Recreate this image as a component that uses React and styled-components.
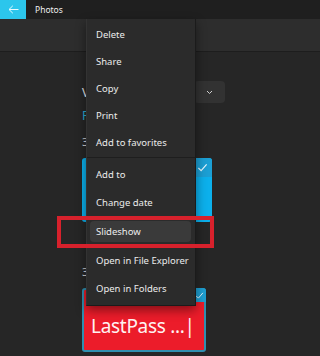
import React from 'react';
import styled, {createGlobalStyle} from 'styled-components';

const GlobalStyle = createGlobalStyle`
  html, body {
    margin: 0;
    padding: 0;
    background: #262626;
  }
  body {
    font-family: 'Noto Sans', 'Open Sans', sans-serif;
  }
`;

const Window = styled.div`
  position: relative;
  width: 320px;
  height: 356px;
  overflow: hidden;
  background: #262626;
  color: #e8e8e8;
`;

const TitleBar = styled.div`
  display: flex;
  align-items: center;
  height: 19px;
  background: #1f1f1f;
`;

const BackButton = styled.div`
  display: flex;
  align-items: center;
  justify-content: center;
  width: 26px;
  height: 19px;
  background: #2cc6ec;
`;

const Title = styled.span`
  margin-left: 9px;
  font-size: 8.5px;
  color: #f0f0f0;
`;

const Toolbar = styled.div`
  height: 32px;
  background: #2d2d2d;
  border-bottom: 1px solid #1d1d1d;
`;

const Content = styled.div`
  display: flex;
  flex-direction: column;
  padding-left: 82px;
  width: 130px;
`;

const FilterRow = styled.div`
  display: flex;
  align-items: center;
  justify-content: space-between;
  margin-top: 29px;
  width: 143px;
  height: 22px;
  font-size: 12px;
`;

const Dropdown = styled.div`
  display: flex;
  align-items: center;
  justify-content: center;
  width: 31px;
  height: 22px;
  border-radius: 4px;
  background: #323232;
`;

const Label = styled.div`
  flex-shrink: 0;
  height: 14px;
  font-size: ${(p) => p.$size || 11}px;
  color: ${(p) => p.$color || '#d8d8d8'};
  line-height: 14px;
  margin-top: ${(p) => p.$top || 0}px;
`;

const BlueTile = styled.div`
  display: flex;
  justify-content: flex-end;
  margin-top: 9px;
  width: 130px;
  height: 64px;
  flex-shrink: 0;
  border-radius: 3px;
  background: #0cb0ec;
`;

const CheckBox = styled.div`
  display: flex;
  align-items: center;
  justify-content: center;
  width: ${(p) => p.$size}px;
  height: ${(p) => p.$size}px;
  background: ${(p) => p.$bg};
  border-top-right-radius: 3px;
`;

const RedTile = styled.div`
  display: flex;
  flex-direction: column;
  flex-shrink: 0;
  margin-top: 9px;
  width: 124px;
  height: 64px;
  box-sizing: border-box;
  border: 2px solid #2f8fb0;
  border-radius: 3px;
  background: #ec1c2a;
`;

const TileTop = styled.div`
  display: flex;
  justify-content: flex-end;
  margin: -2px -2px 0 0;
`;

const TileText = styled.div`
  margin: 12px 0 0 7px;
  font-size: 19px;
  letter-spacing: -0.3px;
  line-height: 24px;
  color: #fff2f2;
  white-space: nowrap;
`;

const Menu = styled.div`
  position: absolute;
  left: 86px;
  top: 19px;
  width: 108px;
  padding: 2px 0;
  display: flex;
  flex-direction: column;
  background: #2b2b2b;
  border-left: 1px solid #333;
  border-right: 1px solid #1b1b1b;
  border-bottom: 1px solid #1b1b1b;
  box-shadow: 0 4px 10px rgba(0, 0, 0, 0.45);
`;

const MenuItem = styled.div`
  display: flex;
  align-items: center;
  height: ${(p) => p.$h}px;
  padding: 0 4px 0 3px;
`;

const ItemInner = styled.div`
  display: flex;
  align-items: center;
  flex: 1;
  height: 21px;
  padding-left: 6px;
  border-radius: 4px;
  background: ${(p) => (p.$active ? '#3a3a3a' : 'transparent')};
  font-size: 9.5px;
  color: #ececec;
  white-space: nowrap;
`;

const Separator = styled.div`
  height: 1px;
  margin: 1px 0 2px;
  background: #1e1e1e;
`;

const Highlight = styled.div`
  position: absolute;
  left: 57px;
  top: 216px;
  width: 157px;
  height: 32px;
  box-sizing: border-box;
  border: 4px solid #d7212c;
`;

const Check = ({size = 10}) => (
  <svg width={size} height={size} viewBox="0 0 12 12">
    <path d="M1.5 6.5 L4.5 9.5 L10.5 2.5" fill="none" stroke="#e6f7ff" strokeWidth="1.3" />
  </svg>
);

const firstGroup = ['Delete', 'Share', 'Copy', 'Print', 'Add to favorites'];
const secondGroup = ['Add to', 'Change date', 'Slideshow', 'Open in File Explorer', 'Open in Folders'];

const App = () => {
  return (
    <Window>
      <GlobalStyle />
      <TitleBar>
        <BackButton>
          <svg width="11" height="9" viewBox="0 0 11 9">
            <path d="M10.5 4.5 H1.2 M4.8 0.8 L1 4.5 L4.8 8.2" fill="none" stroke="#eafaff" strokeWidth="1" />
          </svg>
        </BackButton>
        <Title>Photos</Title>
      </TitleBar>
      <Toolbar />
      <Content>
        <FilterRow>
          <span>V</span>
          <Dropdown>
            <svg width="7" height="5" viewBox="0 0 7 5">
              <path d="M1 1 L3.5 3.5 L6 1" fill="none" stroke="#cfcfcf" strokeWidth="1" />
            </svg>
          </Dropdown>
        </FilterRow>
        <Label $color="#2aa9d2" $size={12} $top={6}>
          F
        </Label>
        <Label $top={12}>3</Label>
        <BlueTile>
          <CheckBox $size={19} $bg="#1c9fd4">
            <Check size={11} />
          </CheckBox>
        </BlueTile>
        <Label $top={43}>3</Label>
        <RedTile>
          <TileTop>
            <CheckBox $size={14} $bg="#1e9fd2">
              <Check size={9} />
            </CheckBox>
          </TileTop>
          <TileText>LastPass ...|</TileText>
        </RedTile>
      </Content>
      <Menu>
        {firstGroup.map((name) => (
          <MenuItem key={name} $h={27}>
            <ItemInner>{name}</ItemInner>
          </MenuItem>
        ))}
        <Separator />
        {secondGroup.map((name) => (
          <MenuItem key={name} $h={28.6}>
            <ItemInner $active={name === 'Slideshow'}>{name}</ItemInner>
          </MenuItem>
        ))}
      </Menu>
      <Highlight />
    </Window>
  );
};

export default App;
